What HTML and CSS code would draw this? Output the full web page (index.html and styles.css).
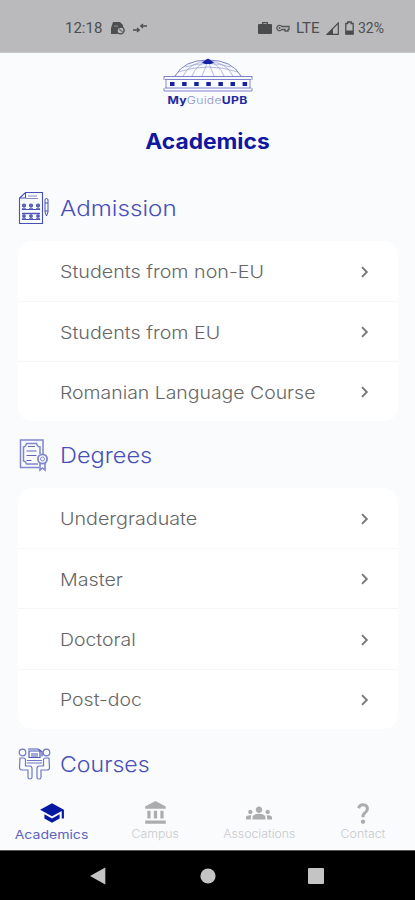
FILE: index.html
```html
<!DOCTYPE html>
<html lang="en">
<head>
<meta charset="utf-8">
<title>MyGuideUPB</title>
<link rel="stylesheet" href="styles.css">
</head>
<body>
<svg class="defs" width="0" height="0" aria-hidden="true">
  <symbol id="chev" viewBox="0 0 12 14"><path d="M3 2.2 7.8 7 3 11.8" fill="none" stroke="#777" stroke-width="1.9"/></symbol>
</svg>
<div class="phone">
  <header class="status">
    <span class="clock">12:18</span>
    <svg class="s-app" width="15" height="14" viewBox="0 0 15 14"><path d="M3 1h7l3 3v3a4 4 0 0 0-5 6H1V7z" fill="#4d4e50"/><circle cx="10.5" cy="9.3" r="3.6" fill="none" stroke="#4d4e50" stroke-width="1.4"/><path d="m8 7 5 4.5M4 5h4" stroke="#77787a" stroke-width="1.3"/></svg>
    <svg class="s-arrow" width="15" height="10" viewBox="0 0 15 10"><path d="M0 7h6M4 5l2.3 2L4 9M14 3H8M10 1 7.700 3 10 5" fill="none" stroke="#4d4e50" stroke-width="1.3"/></svg>
    <svg class="s-bag" width="14" height="14" viewBox="0 0 14 14"><path d="M4 3V1h6v2h3q1 0 1 1v8q0 1-1 1H1q-1 0-1-1V4q0-1 1-1zm1.300 0h3.400v-.8H5.300z" fill="#4a4b4d"/></svg>
    <svg class="s-key" width="14" height="10" viewBox="0 0 14 10"><path d="M5.800 3.500A2.700 2.700 0 1 0 5.800 6.500H9V8h3V6.500h1v-3z" fill="none" stroke="#555658" stroke-width="1.300"/><circle cx="3.600" cy="5" r=".9" fill="#555658"/></svg>
    <span class="lte">LTE</span>
    <svg class="s-sig" width="13" height="13" viewBox="0 0 13 13"><path d="M1 12.300 12.300 1v11.300z" fill="none" stroke="#4a4b4d" stroke-width="1.200"/><path d="M1 12.500 7 6.500v6z" fill="#4a4b4d"/></svg>
    <svg class="s-bat" width="9" height="14" viewBox="0 0 9 14"><path d="M.8 2.500h2V1h3.400v1.500h2v10.700H.8z" fill="none" stroke="#4a4b4d" stroke-width="1.300"/><path d="M1 9.500h7v3.700H1z" fill="#4a4b4d"/></svg>
    <span class="pct">32%</span>
  </header>
  <main class="content">
    <div class="brand">
      <svg width="90" height="34" viewBox="0 0 90 34" fill="none" stroke="#6d74c5">
        <path d="M12 18Q21 2 45 2t33 16" stroke-width=".9"/>
        <path d="M20 18Q27 4 45 3q18 1 25 15M29 18Q34 6 45 3q11 3 16 15M39 18 45 3l6 15M15 14q30-10 60 0M22 9q23-7 46 0" stroke-width=".6" stroke="#858bcb"/>
        <path d="M39 4.500 45 .5l6 4-3 1.500h-6z" fill="#1720a2" stroke="none"/>
        <path d="M1 18.500h88M2 21.500h86M2 30h86M1 33h88" stroke-width=".9"/>
        <path d="M1 18v4M89 18v4M3 22v8M87 22v8M1 30v3M89 30v3" stroke-width=".8"/>
        <path d="M7 26h78" stroke="#1720a2" stroke-width="4" stroke-dasharray="4.500 7.600"/>
      </svg>
      <p class="wordmark"><b>My</b><span>Guide</span><b>UPB</b></p>
    </div>
    <h1>Academics</h1>
    <section>
      <h2>
        <svg width="32" height="34" viewBox="0 0 32 34" fill="none" stroke="#4850b5" stroke-width="1.100"><path d="M7.500 1.500h17v31H1.500V7zM7.500 1.500V7h-6"/><path d="M10 5h9M8 7.500h12" stroke-width=".9" stroke="#7b81c6"/><path d="M4 22.500h18" stroke-width="1.400"/><path d="M4 18.500q2-3 4 0M11 18.500q2-3 4 0M18 18.500q2-3 4 0M4 28.500q2-3 4 0M11 28.500q2-3 4 0M18 28.500q2-3 4 0M4 18.500h18M4 28.500h18"/><g fill="#6970c2"><circle cx="6" cy="14.500" r="1.500"/><circle cx="13" cy="14.500" r="1.500"/><circle cx="20" cy="14.500" r="1.500"/><circle cx="6" cy="25" r="1.300"/><circle cx="13" cy="25" r="1.300"/><circle cx="20" cy="25" r="1.300"/></g><path d="M27 9q0-1.500 1.500-1.500T30 9v12l-1.500 4L27 21zM27 12h3M27 20h3" stroke-width="1"/></svg>
        <span class="t-adm">Admission</span>
      </h2>
      <ul>
        <li><span>Students from non-EU</span><svg class="chev"><use href="#chev"/></svg></li>
        <li><span>Students from EU</span><svg class="chev"><use href="#chev"/></svg></li>
        <li><span class="lang">Romanian Language Course</span><svg class="chev"><use href="#chev"/></svg></li>
      </ul>
    </section>
    <section>
      <h2>
        <svg width="32" height="34" viewBox="0 0 32 34" fill="none" stroke="#7f86cc" stroke-width="1.500"><path d="M21 29.500H2.500V2h22.500v14M20 26H8.500Q8 23.500 5.500 23V9Q8 8.500 8.500 5.500h10q.5 3 3.500 3.500v7"/><path d="M10 8.500h7M8.500 13h10M8.500 17.500h10M8.500 22.500h5" stroke="#5f67be" stroke-width="1.200"/><circle cx="24.500" cy="21" r="4.600" stroke-width="1.800"/><circle cx="24.500" cy="21" r="2" stroke-width="1"/><path d="M22 25v7l2.500-2 2.500 2v-7" stroke-width="1.600"/></svg>
        <span class="t-deg">Degrees</span>
      </h2>
      <ul>
        <li><span>Undergraduate</span><svg class="chev"><use href="#chev"/></svg></li>
        <li><span>Master</span><svg class="chev"><use href="#chev"/></svg></li>
        <li><span class="short">Doctoral</span><svg class="chev"><use href="#chev"/></svg></li>
        <li><span class="short">Post-doc</span><svg class="chev"><use href="#chev"/></svg></li>
      </ul>
    </section>
    <section>
      <h2>
        <svg width="34" height="34" viewBox="0 0 34 34" fill="none" stroke="#6f77c6" stroke-width="1.200"><circle cx="4.500" cy="5.500" r="3.300"/><circle cx="28.500" cy="5.500" r="3.300"/><path d="M2 11h3.500q2 0 2 2v6h4q2.500 0 2.500 2.500v9q0 1.500-2 1.500t-2-1.500V23H4q-2.500 0-2.500-2.500zM31 11h-3.500q-2 0-2 2v6h-4q-2.500 0-2.500 2.500v9q0 1.500 2 1.500t2-1.500V23h6q2.500 0 2.500-2.500z"/><path d="M9 16h15M9 13.500h15"/><path d="M11 10.500V4h11v6.500zM10 2h10M13 7h7M20 2l4 2.500v5M13 9h7" stroke="#4f58b7"/></svg>
        <span class="t-cou">Courses</span>
      </h2>
    </section>
  </main>
  <nav class="tabs">
    <a class="on"><svg viewBox="0 0 24 24"><path d="M5 13.180v4L12 21l7-3.820v-4L12 17zM12 3 1 9l11 6 9-4.910V17h2V9z"/></svg><span>Academics</span></a>
    <a><svg viewBox="0 0 24 24"><path d="M4 10v7h3v-7zm6 0v7h3v-7zM2 22h19v-3H2zm14-12v7h3v-7zm-4.500-9L2 6v2h19V6z"/></svg><span>Campus</span></a>
    <a><svg viewBox="0 0 24 24"><path d="M12 12.750c1.630 0 3.070.39 4.240.9 1.080.48 1.760 1.560 1.760 2.730V18H6v-1.610c0-1.180.68-2.260 1.760-2.730 1.170-.52 2.610-.91 4.240-.91M4 13c1.100 0 2-.9 2-2s-.9-2-2-2-2 .9-2 2 .9 2 2 2m1.130 1.100C4.760 14.040 4.390 14 4 14c-.99 0-1.930.21-2.780.58C.48 14.900 0 15.620 0 16.430V18h4.500v-1.610c0-.83.23-1.610.63-2.290M20 13c1.100 0 2-.9 2-2s-.9-2-2-2-2 .9-2 2 .9 2 2 2m4 3.430c0-.81-.48-1.530-1.220-1.850-.85-.37-1.790-.58-2.780-.58-.39 0-.76.04-1.130.1.400.68.630 1.460.630 2.290V18H24zM12 6c1.660 0 3 1.340 3 3s-1.340 3-3 3-3-1.340-3-3 1.340-3 3-3"/></svg><span>Associations</span></a>
    <a><svg viewBox="0 0 24 24"><path d="M11.070 12.850c.77-1.390 2.250-2.210 3.110-3.440.91-1.290.4-3.700-2.180-3.700-1.690 0-2.520 1.280-2.870 2.340L6.540 6.960C7.250 4.830 9.180 3 11.990 3c2.350 0 3.960 1.070 4.780 2.410.7 1.150 1.110 3.300.03 4.900-1.200 1.770-2.350 2.310-2.970 3.450-.25.46-.35.76-.35 2.240h-2.890c-.01-.78-.13-2.050.48-3.150M14 20c0 1.100-.9 2-2 2s-2-.9-2-2 .9-2 2-2 2 .9 2 2"/></svg><span>Contact</span></a>
  </nav>
  <footer class="sysbar">
    <svg width="18" height="20" viewBox="0 0 18 20"><path d="M16.300 1.500v17L1 10z"/></svg>
    <svg width="16" height="16" viewBox="0 0 16 16"><circle cx="8" cy="8" r="7.600"/></svg>
    <svg width="16" height="16" viewBox="0 0 16 16"><rect width="16" height="16" rx="1"/></svg>
  </footer>
</div>
</body>
</html>
```
FILE: styles.css
```css
* { box-sizing: border-box; }
body, h1, h2, p, ul { margin: 0; padding: 0; }
body { width: 415px; height: 900px; overflow: hidden; font-family: Inter, "Open Sans", sans-serif; }
.defs { display: block; height: 0; }
.phone { height: 900px; display: flex; flex-direction: column; background: #f9fbfd; }
.status { height: 53px; flex: none; background: #bababc; display: flex; align-items: center; padding: 4px 29px 0 65px; color: #4d4e50; font: 15px/20px Roboto, sans-serif; border-bottom: 1px solid #c6c7c9; }
.clock { width: 38px; }
.s-app { margin-left: 7px; }
.s-arrow { margin-left: 8px; }
.s-bag { margin-left: auto; }
.s-key { margin-left: 4px; }
.lte { margin-left: 6px; width: 25px; }
.s-sig { margin-left: 5px; }
.s-bat { margin-left: 6px; }
.pct { margin-left: 4px; width: 28px; font-size: 14px; }
.content { flex: 1; min-height: 0; overflow: hidden; }
.brand { height: 54px; padding-top: 5px; display: flex; flex-direction: column; align-items: center; }
.brand svg { flex: none; margin-left: 1px; }
.wordmark { font-size: 10.5px; line-height: 17px; color: #20299f; white-space: nowrap; letter-spacing: .25px; transform: scaleX(1.16); }
.wordmark b { font-weight: 700; }
.wordmark span { font-weight: 300; color: #8b90c8; }
h1 { margin-top: 20px; text-align: center; font-size: 21px; line-height: 30px; font-weight: 700; color: #0f189f; transform: scaleX(1.085); }
section { padding: 0 17px 0 18px; }
h2 { height: 67px; display: flex; align-items: center; font-size: 21.5px; line-height: 30px; font-weight: 300; color: #4850b8; }
section:first-of-type h2 { margin-top: 17px; }
section:last-of-type h2 { height: 70px; }
h2 svg { flex: none; }
h2 span { margin: 1px 0 0 10px; white-space: nowrap; transform-origin: left; }
.t-adm { transform: scaleX(1.125); }
.t-deg { transform: scaleX(1.095); }
.t-cou { margin: 0 0 0 8px; transform: scaleX(1.075); }
ul { list-style: none; background: #fff; border-radius: 14px; }
li { height: 60.100px; display: flex; align-items: center; justify-content: space-between; padding: 1px 27px 0 42px; font-size: 17.5px; line-height: 24px; font-weight: 300; color: #666; white-space: nowrap; }
li span { margin-top: 1px; transform: scaleX(1.125); transform-origin: left; }
li .lang, li .short { transform: scaleX(1.11); }
li + li { border-top: 1px solid #f5f6f6; }
.chev { width: 12px; height: 14px; }
.tabs { height: 55px; flex: none; display: grid; grid-template-columns: repeat(4, 1fr); background: #f9fbfd; }
.tabs a { display: flex; flex-direction: column; align-items: center; padding-top: 5px; color: #c9cacd; font-size: 11px; line-height: 17px; font-weight: 300; white-space: nowrap; }
.tabs span { transform: scaleX(1.12); }
.tabs svg { width: 26px; height: 26px; fill: #adadae; }
.tabs .on { color: #5c64c0; font-size: 12px; font-weight: 400; }
.tabs .on span { transform: scaleX(1.17); }
.tabs .on svg { fill: #0718a3; }
.sysbar { height: 50px; flex: none; background: #000; border-top: 1px solid #555; display: flex; align-items: center; padding: 0 91px 0 89px; justify-content: space-between; }
.sysbar svg { fill: #c4c4c4; }
```
